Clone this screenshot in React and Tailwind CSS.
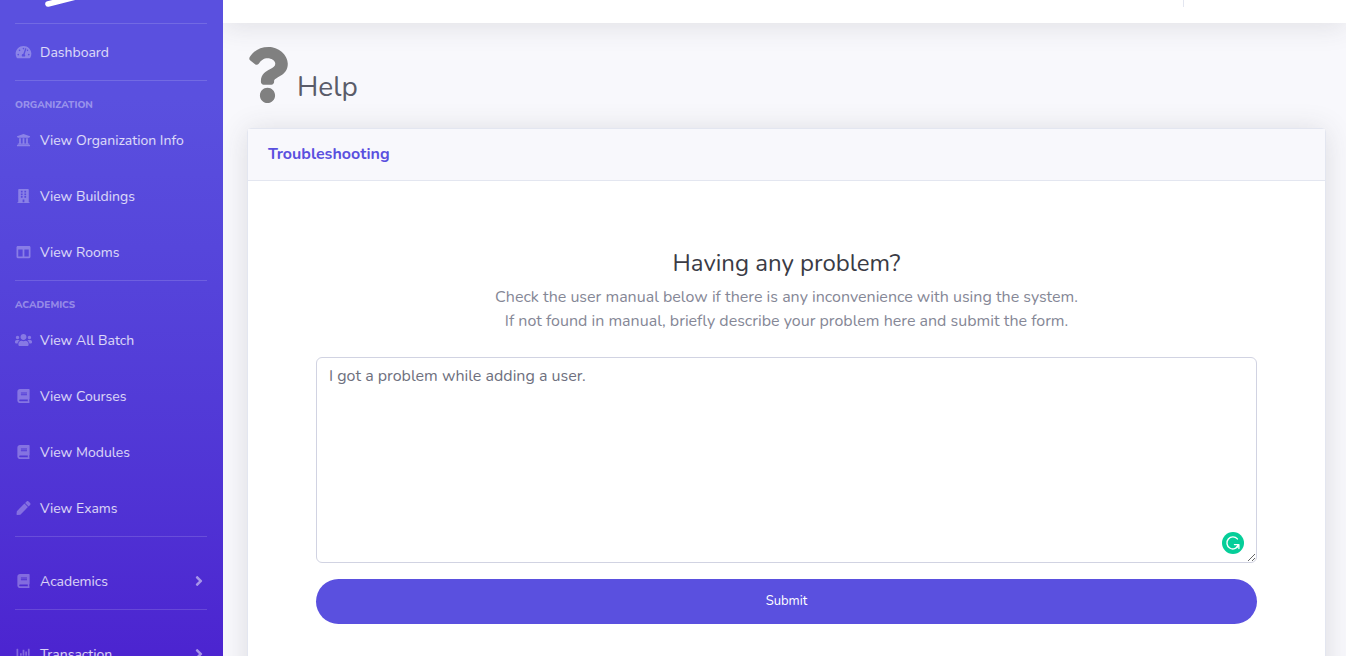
import {
  FaTachometerAlt,
  FaUniversity,
  FaBuilding,
  FaColumns,
  FaUsers,
  FaBook,
  FaPen,
  FaChartBar,
  FaAngleRight,
  FaQuestion,
} from "react-icons/fa";

function Divider({ className = "" }) {
  return <hr className={`ml-[15px] mr-4 border-0 border-t border-white/15 ${className}`} />;
}

function Heading({ children }) {
  return (
    <h2 className="h-[31px] pl-[15px] pt-4 text-[10px] leading-4 font-extrabold uppercase text-white/40">
      {children}
    </h2>
  );
}

function NavItem({ icon: Icon, label, expandable = false }) {
  return (
    <li>
      <a href="#" className="flex h-14 items-center pl-[15px] pr-4 text-sm text-white/80">
        <Icon className="mr-2 h-3.5 w-[17px] shrink-0 text-white/30" />
        <span className="grow pt-0.5 whitespace-nowrap">{label}</span>
        {expandable && <FaAngleRight className="text-base text-white/50" />}
      </a>
    </li>
  );
}

function Sidebar() {
  return (
    <nav className="w-[223px] shrink-0 bg-linear-to-b from-[#5a50df] from-15% to-[#4c24d0]">
      <div className="flex h-[23px] pl-11">
        <svg className="h-2 w-9" viewBox="0 0 36 8" aria-hidden="true">
          <path d="M4 4 L34 -3.6" stroke="white" strokeWidth="5.6" strokeLinecap="round" />
        </svg>
      </div>
      <Divider />
      <ul>
        <NavItem icon={FaTachometerAlt} label="Dashboard" />
      </ul>
      <Divider />
      <Heading>Organization</Heading>
      <ul>
        <NavItem icon={FaUniversity} label="View Organization Info" />
        <NavItem icon={FaBuilding} label="View Buildings" />
        <NavItem icon={FaColumns} label="View Rooms" />
      </ul>
      <Divider />
      <Heading>Academics</Heading>
      <ul>
        <NavItem icon={FaUsers} label="View All Batch" />
        <NavItem icon={FaBook} label="View Courses" />
        <NavItem icon={FaBook} label="View Modules" />
        <NavItem icon={FaPen} label="View Exams" />
      </ul>
      <Divider className="mb-4" />
      <ul>
        <NavItem icon={FaBook} label="Academics" expandable />
      </ul>
      <Divider className="mb-4" />
      <ul>
        <NavItem icon={FaChartBar} label="Transaction" expandable />
      </ul>
    </nav>
  );
}

function HelpForm() {
  return (
    <form className="px-[68px] py-16" onSubmit={(e) => e.preventDefault()}>
      <div className="mb-6 text-center">
        <h3 className="mb-2 pt-1 text-2xl leading-7 text-[#3a3b45]">Having any problem?</h3>
        <p className="leading-6 text-[#858796]" id="help-hint">
          Check the user manual below if there is any inconvenience with using the system.
          <br />
          If not found in manual, briefly describe your problem here and submit the form.
        </p>
      </div>
      <div className="relative mb-4">
        <textarea
          aria-label="Describe your problem"
          aria-describedby="help-hint"
          className="block h-[206px] w-full resize rounded-md border border-[#d1d3e2] bg-white px-3 py-1.5 leading-6 text-[#6e707e] outline-none"
          defaultValue="I got a problem while adding a user."
        />
        <svg className="absolute right-3 bottom-2 size-6" viewBox="0 0 24 24" aria-hidden="true">
          <circle cx="12" cy="12" r="11" fill="#05ce99" />
          <path
            d="M16.4 7.9A6 6 0 1 0 17.4 14.4"
            fill="none"
            stroke="white"
            strokeWidth="1.4"
            strokeLinecap="round"
          />
          <path
            d="M13.4 13.6H17.9V17.6M17.6 13.8L15.6 16.2"
            fill="none"
            stroke="white"
            strokeWidth="1.3"
            strokeLinecap="round"
            strokeLinejoin="round"
          />
        </svg>
      </div>
      <button type="submit" className="h-[45px] w-full rounded-full bg-[#5a50df] text-[13px] text-white">
        Submit
      </button>
    </form>
  );
}

export default function App() {
  return (
    <div className="flex h-screen overflow-hidden bg-[#f8f8fc] font-['Nunito','Lato',sans-serif] text-base">
      <Sidebar />
      <div className="flex min-w-0 grow flex-col overflow-hidden">
        <header className="flex h-[23px] shrink-0 items-start justify-end bg-white pr-[162px] shadow-[0_2px_28px_0_rgba(58,59,69,0.15)]">
          <div className="h-[7px] border-r border-[#e3e6f0]" />
        </header>
        <main className="pt-6 pr-5 pl-[23px]">
          <h1 className="mb-6 flex items-start text-[28px] text-[#5a5c69]">
            <FaQuestion className="h-14 w-[43px] shrink-0 text-[#808080]" />
            <span className="ml-2 pt-[23px] leading-[34px]">Help</span>
          </h1>
          <section className="ml-px rounded border border-[#e3e6f0] bg-white shadow-[0_2px_28px_0_rgba(58,59,69,0.15)]">
            <h2 className="border-b border-[#e3e6f0] bg-[#f8f8fc] px-5 pt-[13px] pb-3.5 leading-6 font-bold text-[#5a50df]">
              Troubleshooting
            </h2>
            <HelpForm />
          </section>
        </main>
      </div>
    </div>
  );
}
